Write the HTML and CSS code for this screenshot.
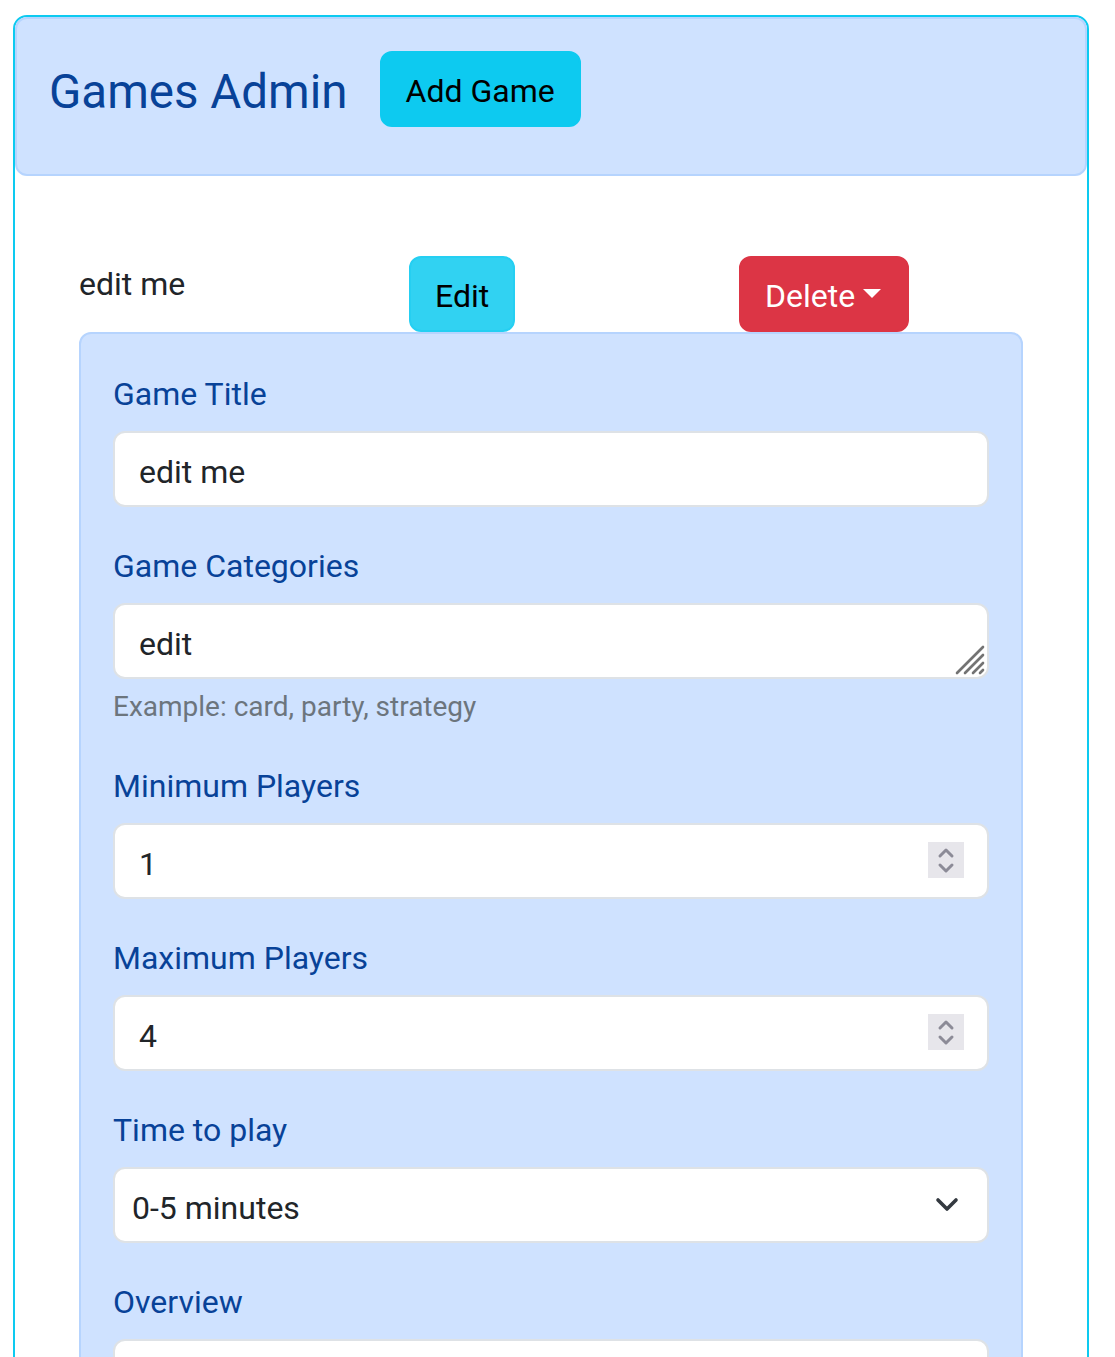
FILE: index.html
```html
<!DOCTYPE html>
<html lang="en">
<head>
<meta charset="utf-8">
<title>Games Admin</title>
<link rel="stylesheet" href="styles.css">
</head>
<body>
<div class="outer">
  <header class="header">
    <h2 class="title">Games Admin</h2>
    <button class="btn btn-add">Add Game</button>
  </header>
  <main class="content">
    <div class="game-row">
      <p class="game-name">edit me</p>
      <div><button class="btn btn-edit">Edit</button></div>
      <div><button class="btn btn-delete">Delete <span class="caret"></span></button></div>
    </div>
    <form class="form-card">
      <div class="group">
        <label class="label">Game Title</label>
        <input class="control" type="text" value="edit me">
      </div>
      <div class="group">
        <label class="label">Game Categories</label>
        <div class="wrap">
          <textarea class="control area" rows="1">edit</textarea>
          <svg class="grip" width="30" height="30" viewBox="0 0 30 30"><g stroke="#737373" stroke-width="2.6" stroke-linecap="round"><line x1="2" y1="28" x2="28" y2="2"/><line x1="10" y1="28" x2="28" y2="10"/><line x1="18" y1="28" x2="28" y2="18"/><line x1="25" y1="28" x2="28" y2="25"/></g></svg>
        </div>
        <div class="help">Example: card, party, strategy</div>
      </div>
      <div class="group">
        <label class="label">Minimum Players</label>
        <div class="wrap">
          <input class="control" type="text" value="1">
          <svg class="spin" width="36" height="36" viewBox="0 0 36 36"><rect width="36" height="36" fill="#e7e6eb"/><g fill="none" stroke="#8c8b97" stroke-width="3" stroke-linecap="round" stroke-linejoin="round"><polyline points="12,14 18,8 24,14"/><polyline points="12,23 18,29 24,23"/></g></svg>
        </div>
      </div>
      <div class="group">
        <label class="label">Maximum Players</label>
        <div class="wrap">
          <input class="control" type="text" value="4">
          <svg class="spin" width="36" height="36" viewBox="0 0 36 36"><rect width="36" height="36" fill="#e7e6eb"/><g fill="none" stroke="#8c8b97" stroke-width="3" stroke-linecap="round" stroke-linejoin="round"><polyline points="12,14 18,8 24,14"/><polyline points="12,23 18,29 24,23"/></g></svg>
        </div>
      </div>
      <div class="group">
        <label class="label">Time to play</label>
        <div class="wrap">
          <select class="control select"><option>0-5 minutes</option></select>
          <svg class="chev" width="24" height="16" viewBox="0 0 24 16"><polyline points="3,3 12,12 21,3" fill="none" stroke="#343a40" stroke-width="3.6" stroke-linecap="round" stroke-linejoin="round"/></svg>
        </div>
      </div>
      <div class="group">
        <label class="label">Overview</label>
        <textarea class="control overview" rows="3"></textarea>
      </div>
    </form>
  </main>
</div>
</body>
</html>
```
FILE: styles.css
```css
* { box-sizing: border-box; }
html, body { margin: 0; padding: 0; background: #fff; }
body {
  font-family: Roboto, "Open Sans", "Liberation Sans", sans-serif;
  font-size: 32px;
  line-height: 48px;
  color: #212529;
}
.outer {
  margin: 15px 0 0 13px;
  width: 1076px;
  border: 2px solid #0dcaf0;
  border-radius: 14px;
  min-height: 1400px;
}
.header {
  display: flex;
  align-items: center;
  gap: 32px;
  background: #cfe2ff;
  border: 2px solid #b6d4fe;
  border-radius: 12px;
  padding: 32px 32px 47px 32px;
}
.title {
  margin: 0;
  padding-top: 6px;
  font-size: 47.5px;
  font-weight: 400;
  line-height: 62px;
  color: #084298;
}
.btn {
  font-family: inherit;
  font-size: 32px;
  line-height: 48px;
  padding: 14px 24px 10px;
  border: 2px solid transparent;
  border-radius: 12px;
  height: 76px;
  cursor: pointer;
}
.btn-add { background: #0dcaf0; border-color: #0dcaf0; color: #000; }
.btn-edit { background: #31d2f2; border-color: #25cff2; color: #000; }
.btn-delete { background: #dc3545; border-color: #dc3545; color: #fff; display: inline-flex; align-items: center; gap: 8px; padding-right: 26px; }
.caret {
  display: inline-block;
  width: 0; height: 0;
  border-left: 9px solid transparent;
  border-right: 9px solid transparent;
  border-top: 9px solid #fff;
  margin-top: -6px;
}
.content { padding: 80px 64px 0 64px; }
.game-row {
  display: grid;
  grid-template-columns: 330px 330px 330px;
}
.game-name { margin: 4px 0 0; }
.form-card {
  width: 944px;
  background: #cfe2ff;
  border: 2px solid #b6d4fe;
  border-radius: 12px;
  padding: 33px 32px 32px 32px;
}
.group { margin-bottom: 32px; }
.label {
  display: block;
  color: #084298;
  padding-top: 3px;
  margin-bottom: 13px;
}
.wrap { position: relative; }
.control {
  display: block;
  width: 100%;
  height: 76px;
  font-family: inherit;
  font-size: 32px;
  line-height: 48px;
  color: #212529;
  background: #fff;
  border: 2px solid #dee2e6;
  border-radius: 12px;
  padding: 15px 24px 9px;
  outline: none;
}
.area { resize: none; overflow: hidden; }
.grip { position: absolute; right: 4px; bottom: 4px; }
.spin { position: absolute; right: 25px; top: 19px; }
.select {
  appearance: none;
  -webkit-appearance: none;
  padding-left: 17px;
}
.chev { position: absolute; right: 30px; top: 30px; }
.help {
  margin-top: 6px;
  padding-top: 2px;
  font-size: 28px;
  line-height: 40px;
  color: #6c757d;
}
.overview { height: 150px; resize: none; }
```
